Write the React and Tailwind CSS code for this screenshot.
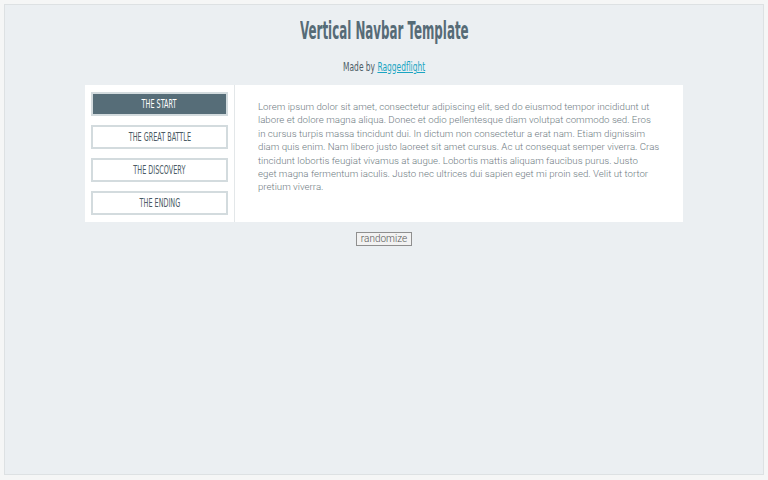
export default function App() {
  const cond = { fontFamily: '"DejaVu Sans Condensed", "DejaVu Sans", sans-serif' };
  const items = ["THE START", "THE GREAT BATTLE", "THE DISCOVERY", "THE ENDING"];
  const lines = [
    "Lorem ipsum dolor sit amet, consectetur adipiscing elit, sed do eiusmod tempor incididunt ut",
    "labore et dolore magna aliqua. Donec et odio pellentesque diam volutpat commodo sed. Eros",
    "in cursus turpis massa tincidunt dui. In dictum non consectetur a erat nam. Etiam dignissim",
    "diam quis enim. Nam libero justo laoreet sit amet cursus. Ac ut consequat semper viverra. Cras",
    "tincidunt lobortis feugiat vivamus at augue. Lobortis mattis aliquam faucibus purus. Justo",
    "eget magna fermentum iaculis. Justo nec ultrices dui sapien eget mi proin sed. Velit ut tortor",
    "pretium viverra.",
  ];
  return (
    <div className="w-[768px] h-[480px] bg-[#f5f6f6] p-[4px]">
      <div className="h-[471px] bg-[#ebeff2] border border-[#dde1e3] flex flex-col items-center">
        <h1 className="mt-[11px] h-[30px] flex items-center justify-center text-[#566b77]" style={cond}>
          <span className="inline-block text-[24px] leading-none font-semibold scale-x-[0.55] origin-center whitespace-nowrap">Vertical Navbar Template</span>
        </h1>
        <p className="mt-[10px] h-[20px] flex items-center justify-center text-[#4d5d66]" style={cond}>
          <span className="inline-block text-[13px] leading-none scale-x-[0.64] origin-center whitespace-nowrap">
            Made by <a className="text-[#1aa5c2] underline">Raggedflight</a>
          </span>
        </p>
        <div className="mt-[9px] w-[598px] h-[137px] bg-white flex">
          <div className="w-[150px] border-r border-[#e3e7e9] pt-[7px] pl-[6px] flex flex-col gap-[9px]">
            {items.map((t, i) => (
              <div
                key={t}
                className={
                  "w-[137px] h-[24px] border-2 border-[#d3dbde] flex items-center justify-center " +
                  (i === 0 ? "bg-[#566d78] text-white" : "bg-white text-[#4b5b64]")
                }
                style={cond}
              >
                <span className="inline-block text-[12px] leading-none scale-x-[0.6] origin-center whitespace-nowrap">{t}</span>
              </div>
            ))}
          </div>
          <div className="flex-1 pl-[23px] pr-[18px] pt-[15px]">
            <p className="text-[9.7px] leading-[13.4px] font-light text-[#6f7c83]" style={{ fontFamily: 'Roboto, sans-serif' }}>
              {lines.map((l) => (
                <span key={l} className="block whitespace-nowrap">{l}</span>
              ))}
            </p>
          </div>
        </div>
        <button className="mt-[10px] h-[14px] px-[4px] border border-[#8f8f8f] bg-[#f2f2f2] text-[10px] leading-none font-light text-[#555]" style={{ fontFamily: 'Roboto, sans-serif' }}>
          randomize
        </button>
      </div>
    </div>
  );
}
